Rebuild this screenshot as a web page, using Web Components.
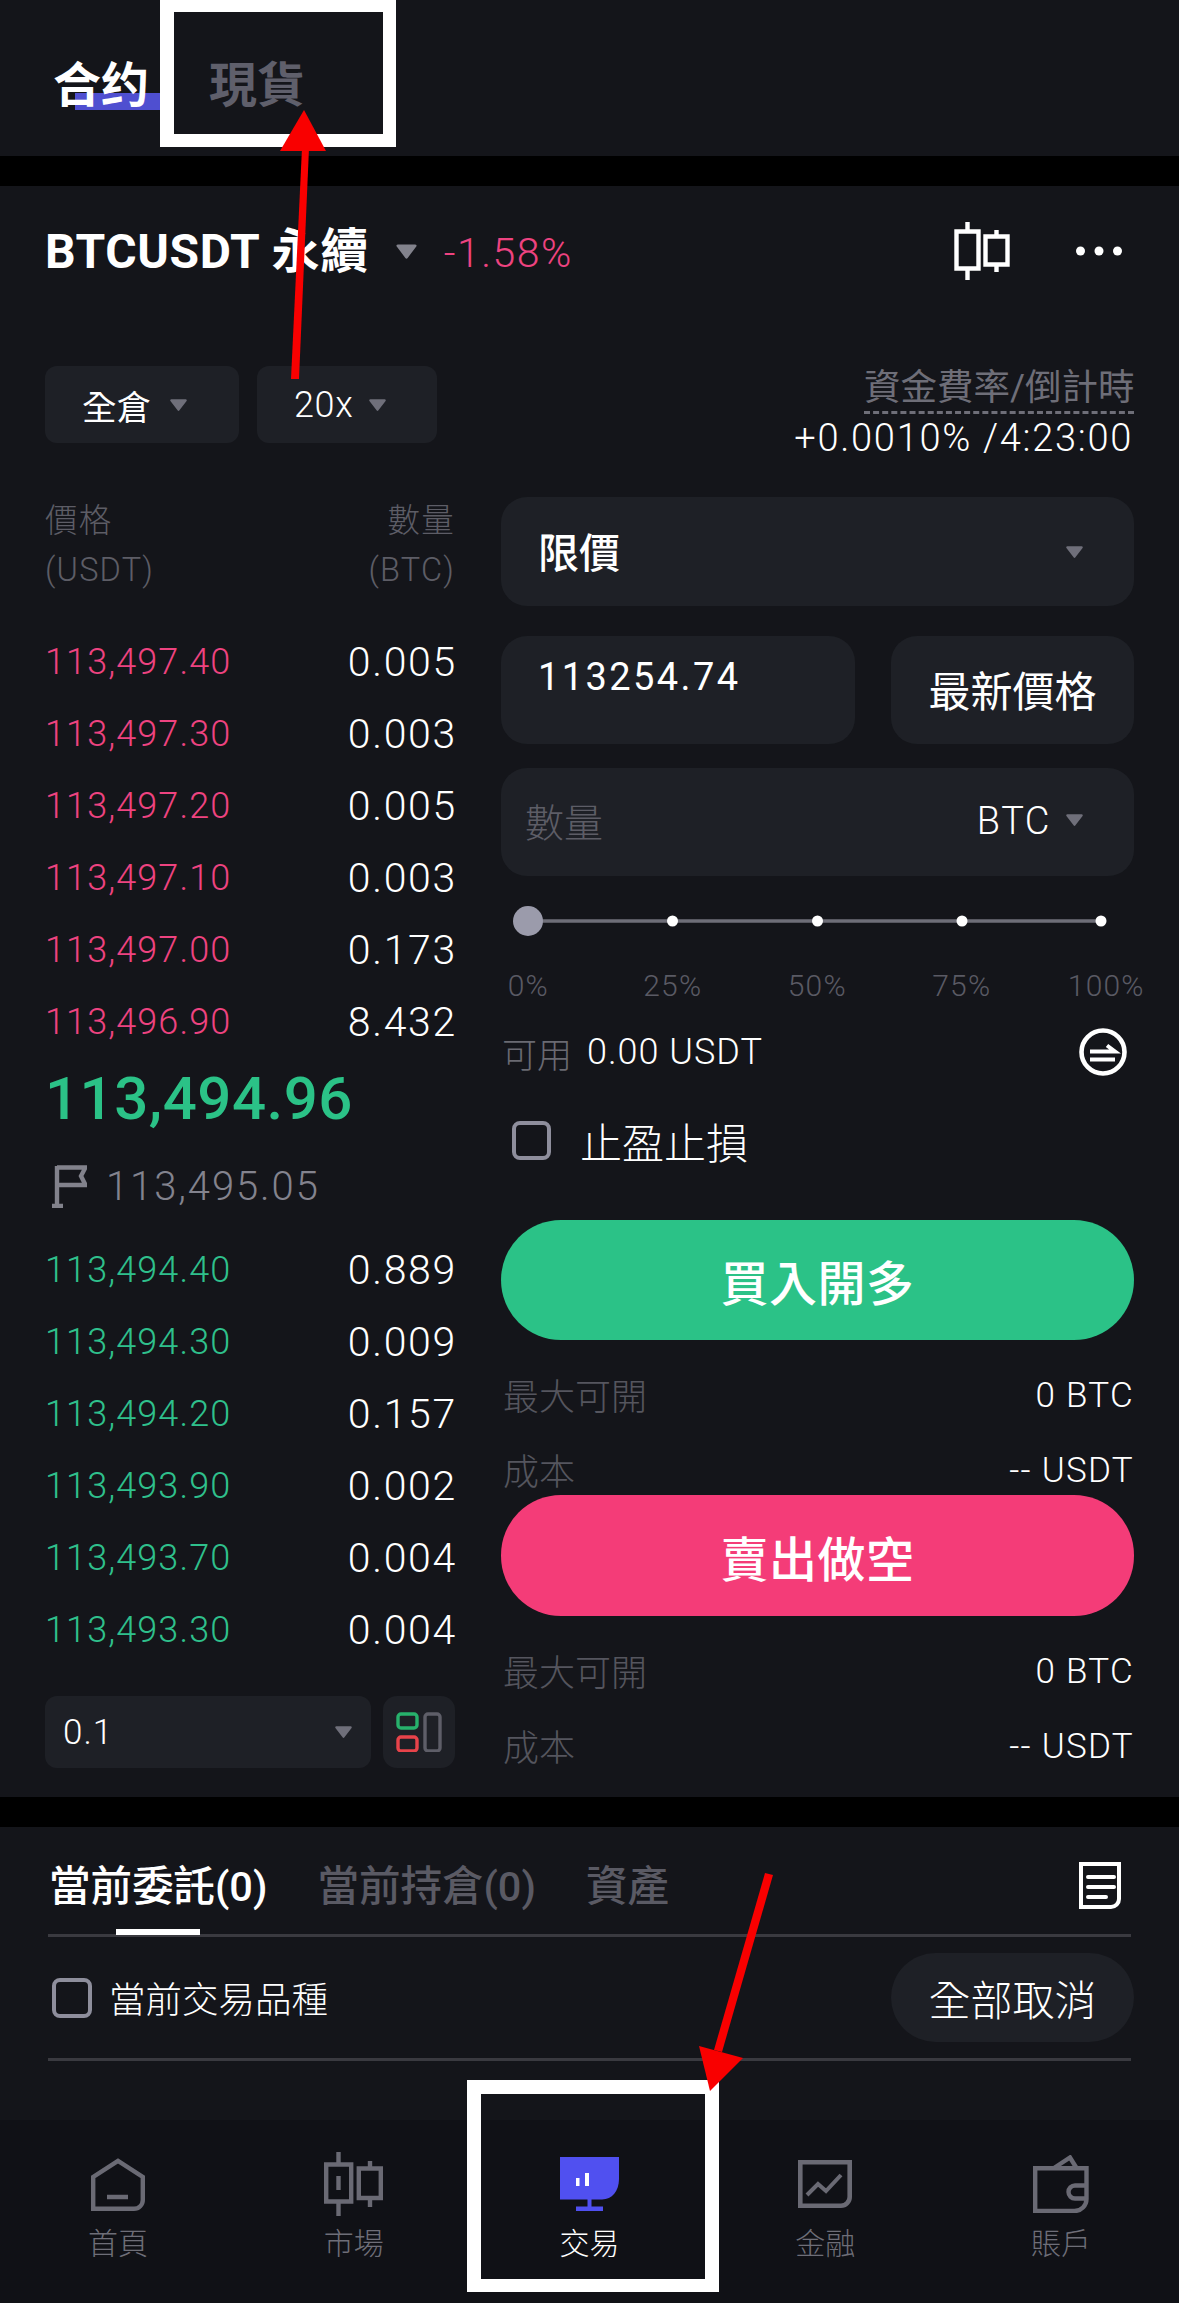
<!DOCTYPE html>
<html lang="zh-Hant">
<head>
<meta charset="utf-8">
<title>BTCUSDT</title>
<style>
  html, body { margin: 0; padding: 0; background: #000; }
  body { width: 1179px; height: 2303px; overflow: hidden; position: relative; color: #fff; font-family: Roboto, "Noto Sans CJK TC", sans-serif; }
</style>
</head>
<body>
<trade-app></trade-app>

<script>
class dropCaret extends HTMLElement {
    constructor() {
        super();
        this.attachShadow({ mode: 'open' });
    }
    connectedCallback() {
        const w = this.getAttribute('w') || 19;
        const c = this.getAttribute('color') || '#6f6f7a';
        this.shadowRoot.innerHTML = /*html*/`
        <style>:host{display:inline-flex;flex:none}svg{display:block}</style>
        <svg width="${w}" height="${w * .72}" viewBox="0 0 20 14.4"><path d="M2.5 1.2H17.5a1.2 1.2 0 0 1 1 1.9L11 13a1.3 1.3 0 0 1-2 0L1.5 3.1a1.2 1.2 0 0 1 1-1.9z" fill="${c}"/></svg>`;
    }
}
customElements.define('drop-caret', dropCaret);

class topTabs extends HTMLElement {
    constructor() {
        super();
        this.attachShadow({ mode: 'open' });
    }
    connectedCallback() {
        this.shadowRoot.innerHTML = /*html*/`
        <style>
        :host{display:flex;align-items:flex-start;height:156px;padding:55px 0 0 53px;box-sizing:border-box;background:#14151a;gap:60px;font-size:48px;font-weight:700;line-height:62px}
        .on{position:relative;z-index:0}
        .on::after{content:'';position:absolute;z-index:-1;left:22px;top:38px;width:90px;height:17px;background:#4f4fd0}
        .off{color:#5f5f6b}
        </style>
        <span class="on">合约</span><span class="off">現貨</span>`;
    }
}
customElements.define('top-tabs', topTabs);

class marketHeader extends HTMLElement {
    constructor() {
        super();
        this.attachShadow({ mode: 'open' });
    }
    connectedCallback() {
        this.shadowRoot.innerHTML = /*html*/`
        <style>
        :host{display:flex;align-items:center;height:130px}
        .sym{font-size:48px;font-weight:700;letter-spacing:.6px;line-height:60px;white-space:nowrap;margin-top:2px}
        drop-caret{margin:0 26px 0 26px}
        .chg{font-size:41px;font-weight:300;letter-spacing:1.500px;color:#ee4380;margin-top:3px}
        .tools{margin-left:auto;display:flex;align-items:center;gap:66px;margin-right:12px}
        svg{display:block}
        </style>
        <span class="sym">BTCUSDT 永續</span><drop-caret w="23" color="#82828c"></drop-caret><span class="chg">-1.58%</span>
        <div class="tools">
          <svg width="56" height="58" viewBox="0 0 56 58" fill="none" stroke="#fff" stroke-width="4.4">
            <path d="M2.500 9.500H24.500V46.500H2.500zM13.500 0V9.500M13.500 46.500V58M31.500 14.500H53.500V42.500H31.500zM42.500 8V14.500M42.500 42.500V50"/>
          </svg>
          <svg width="46" height="10" viewBox="0 0 46 10" fill="#fff"><circle cx="4.500" cy="5" r="4.500"/><circle cx="23" cy="5" r="4.500"/><circle cx="41.500" cy="5" r="4.500"/></svg>
        </div>`;
    }
}
customElements.define('market-header', marketHeader);

class marginBar extends HTMLElement {
    constructor() {
        super();
        this.attachShadow({ mode: 'open' });
    }
    connectedCallback() {
        this.shadowRoot.innerHTML = /*html*/`
        <style>
        :host{display:flex;justify-content:space-between;align-items:flex-start;height:131px;margin-top:50px}
        .btns{display:flex;gap:18px}
        .btn{display:flex;align-items:center;height:77px;background:#1e2026;border-radius:12px;font-size:34.500px;box-sizing:border-box;padding-left:37px}
        .a{width:194px;gap:18px}
        .b{width:180px;gap:15px;font-size:36px;letter-spacing:.6px;font-weight:300}
        .fund{display:flex;flex-direction:column;align-items:flex-end;margin-top:-1px}
        .t{font-size:36.500px;line-height:46px;color:#6e6e78;border-bottom:3px dashed #6e6e78;width:270px;text-align:right;white-space:nowrap}
        .v{font-size:38px;font-weight:300;letter-spacing:1.700px;line-height:42px;white-space:nowrap;padding-right:1px;margin-top:3px}
        </style>
        <div class="btns">
          <div class="btn a">全倉<drop-caret></drop-caret></div>
          <div class="btn b">20x<drop-caret></drop-caret></div>
        </div>
        <div class="fund">
          <div class="t">資金費率/倒計時</div>
          <div class="v">+0.0010% /4:23:00</div>
        </div>`;
    }
}
customElements.define('margin-bar', marginBar);

class bookRow extends HTMLElement {
    constructor() {
        super();
        this.attachShadow({ mode: 'open' });
    }
    connectedCallback() {
        const col = this.getAttribute('side') === 'buy' ? '#2fc08c' : '#ee4380';
        this.shadowRoot.innerHTML = /*html*/`
        <style>
        :host{display:flex;justify-content:space-between;align-items:center;height:72px}
        .p{font-size:36px;font-weight:300;letter-spacing:1.100px;color:${col}}
        .q{font-size:41px;font-weight:300;letter-spacing:1.700px;margin-right:-2px}
        </style>
        <span class="p">${this.getAttribute('price')}</span><span class="q">${this.getAttribute('qty')}</span>`;
    }
}
customElements.define('book-row', bookRow);

class orderBook extends HTMLElement {
    constructor() {
        super();
        this.attachShadow({ mode: 'open' });
    }
    static get asks() {
        return [['113,497.40','0.005'],['113,497.30','0.003'],['113,497.20','0.005'],['113,497.10','0.003'],['113,497.00','0.173'],['113,496.90','8.432']];
    }
    static get bids() {
        return [['113,494.40','0.889'],['113,494.30','0.009'],['113,494.20','0.157'],['113,493.90','0.002'],['113,493.70','0.004'],['113,493.30','0.004']];
    }
    connectedCallback() {
        const rows = (list, side) => list.map(r => `<book-row side="${side}" price="${r[0]}" qty="${r[1]}"></book-row>`).join('');
        this.shadowRoot.innerHTML = /*html*/`
        <style>
        :host{display:block;width:410px;flex:none}
        .head{display:flex;justify-content:space-between;font-size:32.500px;line-height:49px;color:#5d5d66;margin-bottom:31px;font-weight:300;letter-spacing:1.200px;padding-top:1px;margin-top:-1px}
        .r{text-align:right}
        .last{height:80px;display:flex;align-items:center;font-size:60px;font-weight:500;color:#2bc287;letter-spacing:.5px}
        .mark{height:96px;display:flex;align-items:center;gap:19px;font-size:40px;font-weight:300;letter-spacing:1.900px;color:#83838e;margin-left:7px}
        .foot{display:flex;gap:12px;margin-top:30px}
        .sel{flex:1;height:72px;background:#1e2026;border-radius:12px;display:flex;align-items:center;justify-content:space-between;padding:0 18px;font-size:35px;font-weight:300;letter-spacing:1px;box-sizing:border-box}
        .ico{width:72px;height:72px;background:#1e2026;border-radius:14px;display:flex;align-items:center;justify-content:center}
        svg{display:block;flex:none}
        </style>
        <div class="head"><div>價格<br>(USDT)</div><div class="r">數量<br>(BTC)</div></div>
        ${rows(orderBook.asks, 'sell')}
        <div class="last">113,494.96</div>
        <div class="mark">
          <svg width="35" height="44" viewBox="0 0 35 44" fill="none" stroke="#82828c" stroke-width="4.4"><path d="M5 2V42M0 42H11M5 3.500H33.500L29 12L33.500 21H5"/></svg>
          113,495.05
        </div>
        ${rows(orderBook.bids, 'buy')}
        <div class="foot">
          <div class="sel">0.1<drop-caret></drop-caret></div>
          <div class="ico">
            <svg width="46" height="40" viewBox="0 0 46 40" fill="none" stroke-width="3.4">
              <rect x="2" y="2" width="19" height="14" rx="3" stroke="#27b16c"/>
              <rect x="2" y="25" width="19" height="14" rx="3" stroke="#e8434a"/>
              <rect x="29" y="2" width="15" height="37" rx="3" stroke="#5e5e68"/>
            </svg>
          </div>
        </div>`;
    }
}
customElements.define('order-book', orderBook);

class pctSlider extends HTMLElement {
    constructor() {
        super();
        this.attachShadow({ mode: 'open' });
    }
    connectedCallback() {
        this.shadowRoot.innerHTML = /*html*/`
        <style>
        :host{display:block}
        svg{display:block}
        .labels{display:grid;grid-template-columns:repeat(5,144.500px);height:38px;align-items:center;justify-items:center;font-size:30px;font-weight:300;letter-spacing:1.200px;color:#5a5a64;margin-left:-45px}
        </style>
        <svg width="633" height="90" viewBox="0 0 633 90">
          <line x1="28" y1="45" x2="600" y2="45" stroke="#6e6e78" stroke-width="3.500"/>
          <circle cx="27" cy="45" r="15" fill="#9b9bab"/>
          <circle cx="171.500" cy="45" r="5.500" fill="#fff"/>
          <circle cx="316.500" cy="45" r="5.500" fill="#fff"/>
          <circle cx="461" cy="45" r="5.500" fill="#fff"/>
          <circle cx="600" cy="45" r="5.500" fill="#fff"/>
        </svg>
        <div class="labels"><span>0%</span><span>25%</span><span>50%</span><span>75%</span><span>100%</span></div>`;
    }
}
customElements.define('pct-slider', pctSlider);

class infoRows extends HTMLElement {
    constructor() {
        super();
        this.attachShadow({ mode: 'open' });
    }
    connectedCallback() {
        this.shadowRoot.innerHTML = /*html*/`
        <style>
        :host{display:block;height:155px;padding-top:16px;box-sizing:border-box}
        .row{display:flex;justify-content:space-between;align-items:center;height:75px;padding-left:2px}
        .k{font-size:36px;color:#55555e;font-weight:300}
        .v{font-size:35px;font-weight:300;letter-spacing:1.300px;margin-top:4px}
        </style>
        <div class="row"><span class="k">最大可開</span><span class="v">0 BTC</span></div>
        <div class="row"><span class="k">成本</span><span class="v">-- USDT</span></div>`;
    }
}
customElements.define('info-rows', infoRows);

class orderForm extends HTMLElement {
    constructor() {
        super();
        this.attachShadow({ mode: 'open' });
    }
    connectedCallback() {
        this.shadowRoot.innerHTML = /*html*/`
        <style>
        :host{display:block;flex:1;min-width:0}
        .field{background:#1e2026;border-radius:26px;display:flex;align-items:center;box-sizing:border-box}
        .type{height:109px;padding:0 50px 0 37px;justify-content:space-between;font-size:41px;font-weight:500;margin-bottom:30px}
        .type span{margin-top:-3px}
        .pair{display:flex;justify-content:space-between;margin-bottom:24px}
        .price{width:354px;height:108px;padding:0 0 26px 37px;font-size:38px;font-weight:400;letter-spacing:2.400px}
        .latest{width:243px;height:108px;justify-content:center;font-size:42px;padding-bottom:3px}
        .qty{height:108px;padding:0 50px 4px 24px;font-size:39px}
        .qty .ph{color:#5d5d66;font-weight:300}
        .qty .u{margin-left:auto;font-weight:300;letter-spacing:1.500px;font-size:38px;margin-right:14px;margin-top:2px}
        .avail{display:flex;align-items:center;height:86px;margin-top:5px;padding:0 7px 0 1px;font-size:35px;gap:15px;font-weight:300}
        .avail .k{color:#6a6a72}
        .avail .n{font-size:36px;font-weight:300;letter-spacing:1px}
        .avail svg{margin-left:auto}
        .tpsl{display:flex;align-items:center;height:90px;gap:29px;padding-left:11px;font-size:42px;font-weight:300}
        .box{width:39px;height:39px;border:4px solid #8e8e9c;border-radius:8px;box-sizing:border-box}
        .cta{height:120px;border-radius:60px;display:flex;align-items:center;justify-content:center;font-size:48px;font-weight:500;letter-spacing:.5px}
        .buy{background:#2bc287;margin-top:35px}
        .sell{background:#f43c78;height:121px;position:relative}
        svg{display:block;flex:none}
        </style>
        <div class="field type"><span>限價</span><drop-caret></drop-caret></div>
        <div class="pair">
          <div class="field price">113254.74</div>
          <div class="field latest">最新價格</div>
        </div>
        <div class="field qty"><span class="ph">數量</span><span class="u">BTC</span><drop-caret></drop-caret></div>
        <pct-slider></pct-slider>
        <div class="avail">
          <span class="k">可用</span><span class="n">0.00 USDT</span>
          <svg width="48" height="48" viewBox="0 0 48 48" fill="none" stroke="#fff" stroke-width="4.600"><circle cx="24" cy="24" r="21.500"/><path d="M11 23.500H36L28 17.500M11 31.500H36" stroke-width="4"/></svg>
        </div>
        <div class="tpsl"><span class="box"></span>止盈止損</div>
        <div class="cta buy">買入開多</div>
        <info-rows></info-rows>
        <div class="cta sell">賣出做空</div>
        <info-rows></info-rows>`;
    }
}
customElements.define('order-form', orderForm);

class tradePanel extends HTMLElement {
    constructor() {
        super();
        this.attachShadow({ mode: 'open' });
    }
    connectedCallback() {
        this.shadowRoot.innerHTML = /*html*/`
        <style>
        :host{display:block;height:1611px;background:#14151a;padding:0 45px;box-sizing:border-box;overflow:hidden}
        .cols{display:flex;gap:46px}
        </style>
        <market-header></market-header>
        <margin-bar></margin-bar>
        <div class="cols"><order-book></order-book><order-form></order-form></div>`;
    }
}
customElements.define('trade-panel', tradePanel);

class ordersPanel extends HTMLElement {
    constructor() {
        super();
        this.attachShadow({ mode: 'open' });
    }
    connectedCallback() {
        this.shadowRoot.innerHTML = /*html*/`
        <style>
        :host{display:block;height:293px;background:#14151a;padding:0 48px;box-sizing:border-box}
        .tabs{display:flex;align-items:center;height:110px;box-sizing:border-box;border-bottom:3px solid #3a3a40;position:relative;gap:50px;font-size:41.500px;font-weight:500;color:#5a5a64;padding:5px 10px 0 1px}
        .tabs .on{color:#fff}
        .tabs svg{margin-left:auto;align-self:flex-start;margin-top:30px}
        .tabs i{position:absolute;left:68px;bottom:-1px;width:84px;height:6px;background:#fff}
        .filter{display:flex;align-items:center;height:124px;box-sizing:border-box;border-bottom:3px solid #3a3a40;padding:0 0 0 4px}
        .box{width:40px;height:40px;border:4px solid #8e8e9c;border-radius:8px;box-sizing:border-box}
        .lbl{font-size:36.500px;font-weight:300;margin-left:17px}
        .pill{margin-left:auto;margin-right:-3px;width:243px;height:89px;border-radius:45px;background:#1e2026;display:flex;align-items:center;justify-content:center;font-size:42px;font-weight:300}
        svg{display:block;flex:none}
        </style>
        <div class="tabs">
          <span class="on">當前委託(0)</span><span>當前持倉(0)</span><span>資產</span>
          <svg width="42" height="47" viewBox="0 0 42 47" fill="none" stroke="#fff" stroke-width="4"><path d="M2 2H40V37a8 8 0 0 1-8 8H2z"/><path d="M9 15H35M9 25H35M9 35H27" stroke-linecap="round"/></svg>
          <i></i>
        </div>
        <div class="filter">
          <span class="box"></span><span class="lbl">當前交易品種</span>
          <span class="pill">全部取消</span>
        </div>`;
    }
}
customElements.define('orders-panel', ordersPanel);

class navItem extends HTMLElement {
    constructor() {
        super();
        this.attachShadow({ mode: 'open' });
    }
    connectedCallback() {
        const on = this.hasAttribute('active');
        this.shadowRoot.innerHTML = /*html*/`
        <style>
        :host{display:flex;flex-direction:column;align-items:center}
        .ic{height:64px;margin-top:32px;display:flex;align-items:center;justify-content:center}
        .tx{font-size:30px;line-height:40px;margin-top:8px;font-weight:300;color:${on ? '#fff' : '#6e6e78'}}
        </style>
        <div class="ic"><slot name="icon"></slot></div>
        <div class="tx"><slot></slot></div>`;
    }
}
customElements.define('nav-item', navItem);

class bottomNav extends HTMLElement {
    constructor() {
        super();
        this.attachShadow({ mode: 'open' });
    }
    connectedCallback() {
        this.shadowRoot.innerHTML = /*html*/`
        <style>
        :host{display:grid;grid-template-columns:repeat(5,1fr);height:183px;background:#101116}
        svg{display:block}
        </style>
        <nav-item>
          <svg slot="icon" width="54" height="53" viewBox="0 0 54 53" fill="none" stroke="#6a6a74" stroke-width="4.400"><path d="M2.200 50.800V19L27 2.800 51.800 19V42a8.800 8.800 0 0 1-8.800 8.800z"/><path d="M16 39H37" stroke-width="4.500"/></svg>
          首頁
        </nav-item>
        <nav-item>
          <svg slot="icon" width="59" height="64" viewBox="0 0 59 64" fill="none" stroke="#6a6a74" stroke-width="4.400"><path d="M2.200 12.500H27.200V49.500H2.200zM14.500 0V12.500M14.500 49.500V64M14.500 24V38M34.800 16.500H56.800V46H34.800zM46 9V16.500M46 46V55"/></svg>
          市場
        </nav-item>
        <nav-item active>
          <svg slot="icon" width="59" height="54" viewBox="0 0 59 54"><path d="M0 0H59V22C59 34 52 42.500 42 42.500H0z" fill="#5050f0"/><path d="M27.500 42H31.500V50H27.500zM16 49.500H43V54H16z" fill="#5050f0"/><path d="M16 21H19.500V29H16zM25 16H29V29H25z" fill="#fff"/></svg>
          交易
        </nav-item>
        <nav-item>
          <svg slot="icon" width="54" height="48" viewBox="0 0 54 48" fill="none" stroke="#6a6a74" stroke-width="4.600"><path d="M2.300 2.300H51.700V37a8.700 8.700 0 0 1-8.700 8.700H2.300z"/><path d="M9 35L20 24L28 31L43 15" stroke-width="4"/></svg>
          金融
        </nav-item>
        <nav-item>
          <svg slot="icon" width="56" height="58" viewBox="0 0 56 58" fill="none" stroke="#6a6a74" stroke-width="4.400"><path d="M2.200 13.200H53.500V44a12 12 0 0 1-12 12H2.200z"/><path d="M21 13L37 2.500L43.500 13"/><path d="M53.500 30.500H42a6.500 6.500 0 0 0 0 13H53.500"/></svg>
          賬戶
        </nav-item>`;
    }
}
customElements.define('bottom-nav', bottomNav);

// highlight boxes and arrows drawn over the screenshot
class markUp extends HTMLElement {
    constructor() {
        super();
        this.attachShadow({ mode: 'open' });
    }
    connectedCallback() {
        this.shadowRoot.innerHTML = /*html*/`
        <style>:host{position:absolute;left:0;top:0;width:1179px;height:2303px;pointer-events:none}svg{display:block}</style>
        <svg width="1179" height="2303" viewBox="0 0 1179 2303">
          <path fill="#fff" fill-rule="evenodd" d="M160 0H396V147H160zM174 12V134H383V12z"/>
          <path fill="#fff" fill-rule="evenodd" d="M467 2080H719V2292H467zM481 2094V2279H705V2094z"/>
          <g fill="#f90000">
            <polygon points="302,148 309,148 299,379 291,379"/>
            <polygon points="304,110 326,151 280,151"/>
            <polygon points="765,1873 773,1875 722,2052 714,2050"/>
            <polygon points="710,2091 699,2046 743,2058"/>
          </g>
        </svg>`;
    }
}
customElements.define('mark-up', markUp);

class tradeApp extends HTMLElement {
    constructor() {
        super();
        this.attachShadow({ mode: 'open' });
    }
    connectedCallback() {
        this.shadowRoot.innerHTML = /*html*/`
        <style>
        :host{display:flex;flex-direction:column;gap:30px;width:1179px;height:2303px}
        .low{display:block}
        </style>
        <top-tabs></top-tabs>
        <trade-panel></trade-panel>
        <div class="low"><orders-panel></orders-panel><bottom-nav></bottom-nav></div>
        <mark-up></mark-up>`;
    }
}
customElements.define('trade-app', tradeApp);
</script>
</body>
</html>
